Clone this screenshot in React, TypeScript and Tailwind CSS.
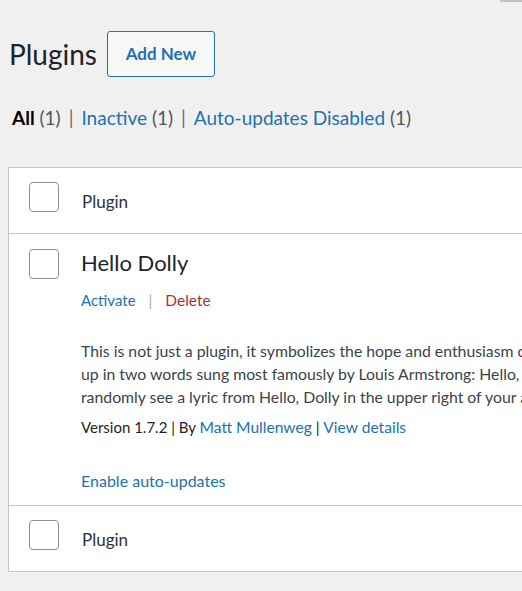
import React from 'react'

const font = "font-['Lato','Noto_Sans',sans-serif]"

function Checkbox() {
  return <span className="block h-[30px] w-[30px] shrink-0 rounded-[4px] border border-[#8c8f94] bg-white" />
}

function HeadRow({ top }: { top?: boolean }) {
  return (
    <div className={`flex h-[66px] items-start pl-[20px] ${top ? 'border-b' : 'border-t'} border-[#c3c4c7]`}>
      <div className="mt-[14px] w-[53px]">
        <Checkbox />
      </div>
      <span className="mt-[22px] text-[17px] leading-[24px] text-[#2c3338]">Plugin</span>
    </div>
  )
}

export default function App() {
  return (
    <div className={`min-h-screen w-full overflow-hidden bg-[#f0f0f1] ${font}`}>
      <div className="flex justify-end">
        <div className="h-[2px] w-[22px] bg-[#c3c4c7]" />
      </div>

      <div className="mt-[29px] flex items-center gap-[10px] pl-[9px]">
        <h1 className="text-[28px] leading-[34px] text-[#1d2327]">Plugins</h1>
        <button className="h-[46px] w-[108px] rounded-[3px] border border-[#2271b1] bg-[#f6f7f7] text-[17px] font-bold text-[#2271b1]">
          Add New
        </button>
      </div>

      <ul className="mt-[27px] flex items-center whitespace-nowrap pl-[12px] text-[19px] leading-[28px] text-[#646970]">
        <li>
          <span className="font-bold text-black">All</span> <span className="text-[#50575e]">(1)</span>
          <span className="mx-[8px]">|</span>
        </li>
        <li>
          <span className="text-[#2271b1]">Inactive</span> <span className="text-[#50575e]">(1)</span>
          <span className="mx-[8px]">|</span>
        </li>
        <li>
          <span className="text-[#2271b1]">Auto-updates Disabled</span> <span className="text-[#50575e]">(1)</span>
        </li>
      </ul>

      <div className="ml-[8px] mt-[35px] w-[900px] border border-[#c3c4c7] bg-white">
        <HeadRow top />

        <div className="flex items-start pb-[13px] pl-[20px]">
          <div className="mt-[15px] w-[52px]">
            <Checkbox />
          </div>
          <div className="pt-[13px] text-[16px] leading-[23px] text-[#3c434a]">
            <div className="text-[22px] leading-[32px] text-[#1d2327]">Hello Dolly</div>
            <div className="mt-[9px] text-[15px] leading-[24px]">
              <a className="text-[#2271b1]">Activate</a>
              <span className="mx-[13px] text-[#a7aaad]">|</span>
              <a className="text-[15.5px] text-[#b32d2e]">Delete</a>
            </div>
            <p className="mt-[27px] whitespace-nowrap text-[15.8px]">
              <span className="block">This is not just a plugin, it symbolizes the hope and enthusiasm of an entire generation summed</span>
              <span className="block">up in two words sung most famously by Louis Armstrong: Hello, Dolly. When activated you will</span>
              <span className="block">randomly see a lyric from Hello, Dolly in the upper right of your admin screen on every page.</span>
            </p>
            <div className="mt-[8px] text-[15px] text-[#1d2327]">
              Version 1.7.2 | By <a className="text-[15.6px] text-[#2271b1]">Matt Mullenweg</a> |{' '}
              <a className="text-[15.6px] text-[#2271b1]">View details</a>
            </div>
            <div className="mt-[30px] text-[16px] text-[#2271b1]">Enable auto-updates</div>
          </div>
        </div>

        <HeadRow />
      </div>
    </div>
  )
}
